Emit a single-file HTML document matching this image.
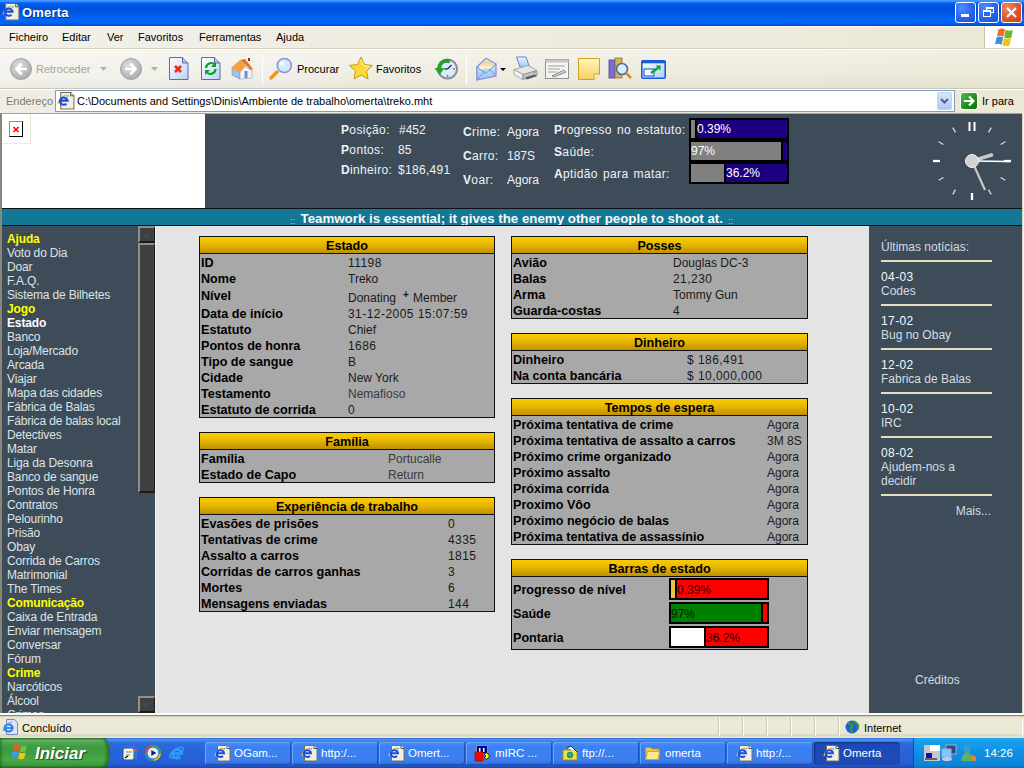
<!DOCTYPE html>
<html><head><meta charset="utf-8">
<style>
*{margin:0;padding:0;box-sizing:border-box}
html,body{width:1024px;height:768px;overflow:hidden;background:#ece9d8;font-family:"Liberation Sans",sans-serif;font-size:11px;position:relative}
.a{position:absolute}
.t{position:absolute;white-space:nowrap;line-height:14px}
svg{position:absolute;overflow:visible}
#title{left:0;top:0;width:1024px;height:26px;background:linear-gradient(#4898ff 0px,#3a8cff 1.5px,#0a6cf8 2.5px,#005ae8 4px,#0052de 8px,#0054e0 12px,#0062f2 17px,#0068fa 20px,#0062f4 23px,#0058e8 24.5px,#003cc0 26px)}
#menu{left:0;top:26px;width:1024px;height:23px;border-top:1px solid #fffbf0;background:linear-gradient(90deg,#f1f0ea 0%,#eeecdf 50%,#ebe8d6 100%);border-bottom:1px solid #d8d2bd}
#tool{left:0;top:49px;width:1024px;height:40px;background:linear-gradient(rgba(255,255,255,0.35),rgba(255,255,255,0) 70%,rgba(0,0,0,0.03)),linear-gradient(90deg,#f3f2ed 0%,#eeecdf 50%,#ebe8d6 100%);border-top:1px solid #fff;border-bottom:1px solid #cbc7b8}
#addr{left:0;top:89px;width:1024px;height:24px;background:linear-gradient(90deg,#efede4 0%,#ebe8d6 100%);border-top:1px solid #fff}
#page{left:0;top:113px;width:1024px;height:600px;background:#3e4c59;border-left:2px solid #8a877a;border-top:1px solid #a8a49a}
#logo{left:2px;top:114px;width:203px;height:94px;background:#fff}
#banner{left:2px;top:208px;width:1020px;height:18px;background:#127896;border-top:1px solid #111;border-bottom:1px solid #111}
#side{left:2px;top:226px;width:136px;height:487px;background:#3e4c59}
#content{left:155px;top:226px;width:714px;height:487px;background:#e4e4e4;border-left:1px solid #f4f4f4}
#news{left:869px;top:226px;width:153px;height:487px;background:#3e4c59}
#status{left:0;top:713px;width:1024px;height:25px;background:linear-gradient(#fffff8 0px,#fffff8 2px,#8a8678 2px,#8a8678 3px,#c8c4b0 3px,#e6e2d0 4px,#ece9d8 6px,#ebe8d6 20px,#d8d4c0 23px,#ece6cc 24px)}
#task{left:0;top:738px;width:1024px;height:30px;background:linear-gradient(#2a62d6 0px,#4892f0 1.5px,#3f84ea 3px,#2d6ade 5px,#2862d8 15px,#2560d6 24px,#2258cf 27px,#1a48b0 30px)}
.menu{top:30px;font-size:11px;color:#000}
.tb{font-size:11px;color:#000;top:62px}
</style></head><body>
<!-- ===== TITLE BAR ===== -->
<div id="title" class="a"></div>
<svg style="left:2px;top:3px" width="18" height="18" viewBox="0 0 17 17"><path d="M3.5 0.5h9.5l3 3v12.5H3.5z" fill="#f2efe2" stroke="#7a6e58"/><path d="M13 0.5v3h3" fill="#fff" stroke="#5a5040"/><path d="M1 11c1-4 4-7 8-8" stroke="#f0b050" stroke-width="1.3" fill="none"/><path d="M3 8.2h7a3.6 3.4 0 1 0-1 2.8" fill="none" stroke="#1a50d8" stroke-width="2"/><path d="M9.5 4.5l1.5-1.5" stroke="#30c0f0" stroke-width="1.2"/></svg>
<div class="t" style="left:22px;top:6px;font-size:13px;font-weight:bold;color:#fff;text-shadow:1px 1px 0 #0a2a80;letter-spacing:0.2px">Omerta</div>
<!-- window buttons -->
<div class="a" style="left:955px;top:2px;width:21px;height:21px;border:1px solid #fff;border-radius:3px;background:radial-gradient(circle at 30% 25%,#4f8cff 0%,#2a66f2 50%,#1a4fe0 100%)"></div>
<div class="a" style="left:961px;top:14px;width:8px;height:3px;background:#fff"></div>
<div class="a" style="left:978px;top:2px;width:21px;height:21px;border:1px solid #fff;border-radius:3px;background:radial-gradient(circle at 30% 25%,#4f8cff 0%,#2a66f2 50%,#1a4fe0 100%)"></div>
<div class="a" style="left:986px;top:7px;width:8px;height:6px;border:1px solid #fff;border-top-width:2px"></div>
<div class="a" style="left:983px;top:10px;width:8px;height:7px;border:1px solid #fff;border-top-width:2px;background:#2a66f2"></div>
<div class="a" style="left:1001px;top:2px;width:21px;height:21px;border:1px solid #fff;border-radius:3px;background:radial-gradient(circle at 30% 25%,#f08a68 0%,#e2582e 50%,#c93d14 100%)"></div>
<svg style="left:1001px;top:2px" width="21" height="21"><path d="M6 6l9 9M15 6l-9 9" stroke="#fff" stroke-width="2"/></svg>

<!-- ===== MENU BAR ===== -->
<div id="menu" class="a"></div>
<div class="t menu" style="left:9px">Ficheiro</div>
<div class="t menu" style="left:62px">Editar</div>
<div class="t menu" style="left:107px">Ver</div>
<div class="t menu" style="left:138px">Favoritos</div>
<div class="t menu" style="left:199px">Ferramentas</div>
<div class="t menu" style="left:276px">Ajuda</div>
<div class="a" style="left:984px;top:26px;width:1px;height:22px;background:#c8c4b0"></div>
<div class="a" style="left:985px;top:26px;width:39px;height:22px;background:#fff"></div>
<svg style="left:995px;top:28px" width="20" height="18" viewBox="0 0 20 18">
 <path d="M3.5 1.2c2.2-1 4.5-0.8 6.6 0.3l-1.6 7.2c-2.1-1.1-4.4-1.3-6.6-0.3z" fill="#f46a26"/>
 <path d="M10.8 1.8c2.3 1.2 4.7 1.3 7.2 0.3l-1.7 7.4c-2.4 1-4.8 0.9-7.1-0.3z" fill="#6ab82e"/>
 <path d="M1.6 9.2c2.2-1 4.5-0.8 6.6 0.3l-1.6 7.2c-2.1-1.1-4.4-1.3-6.6-0.3z" fill="#3c8ee0"/>
 <path d="M9 9.8c2.3 1.2 4.7 1.3 7.2 0.3l-1.7 7.4c-2.4 1-4.8 0.9-7.1-0.3z" fill="#f4c21c"/>
</svg>

<!-- ===== TOOLBAR ===== -->
<div id="tool" class="a"></div>
<!-- back -->
<div class="a" style="left:10px;top:58px;width:22px;height:22px;border-radius:50%;background:radial-gradient(circle at 40% 35%,#e0e0e0,#b8b8b8 60%,#9c9c9c);border:1px solid #a0a0a0"></div>
<svg style="left:10px;top:58px" width="22" height="22"><path d="M16 11H7M11 6.5L6.5 11l4.5 4.5" stroke="#fff" stroke-width="2.6" fill="none" stroke-linecap="round" stroke-linejoin="round"/></svg>
<div class="t tb" style="left:36px;color:#a8a596">Retroceder</div>
<svg style="left:100px;top:67px" width="7" height="4"><path d="M0 0h7L3.5 4z" fill="#b4b1a4"/></svg>
<!-- forward -->
<div class="a" style="left:120px;top:58px;width:22px;height:22px;border-radius:50%;background:radial-gradient(circle at 40% 35%,#e0e0e0,#b8b8b8 60%,#9c9c9c);border:1px solid #a0a0a0"></div>
<svg style="left:120px;top:58px" width="22" height="22"><path d="M6 11h9M11 6.5l4.5 4.5L11 15.5" stroke="#fff" stroke-width="2.6" fill="none" stroke-linecap="round" stroke-linejoin="round"/></svg>
<svg style="left:151px;top:67px" width="7" height="4"><path d="M0 0h7L3.5 4z" fill="#b4b1a4"/></svg>
<!-- stop -->
<svg style="left:169px;top:57px" width="20" height="23" viewBox="0 0 20 23">
 <defs><linearGradient id="doc" x1="0" y1="0" x2="1" y2="1"><stop offset="0" stop-color="#fff"/><stop offset="1" stop-color="#b8d4f4"/></linearGradient></defs>
 <path d="M0.5 0.5h13l5.5 5.5v16.5H0.5z" fill="url(#doc)" stroke="#5a6ea8"/>
 <path d="M13.5 0.5v5.5h5.5" fill="#a8c4ec" stroke="#5a6ea8"/>
 <path d="M6 9l6 6M12 9l-6 6" stroke="#f02a10" stroke-width="2.6"/>
</svg>
<!-- refresh -->
<svg style="left:201px;top:57px" width="20" height="23" viewBox="0 0 20 23">
 <path d="M0.5 0.5h13l5.5 5.5v16.5H0.5z" fill="url(#doc)" stroke="#5a6ea8"/>
 <path d="M13.5 0.5v5.5h5.5" fill="#a8c4ec" stroke="#5a6ea8"/>
 <path d="M5 11a5 5 0 0 1 8.5-3.5M14.5 12a5 5 0 0 1-8.5 3.5" stroke="#12a020" stroke-width="2.2" fill="none"/>
 <path d="M15 5v5h-5z" fill="#12a020"/><path d="M4 18v-5h5z" fill="#12a020"/>
</svg>
<!-- home -->
<svg style="left:230px;top:57px" width="24" height="23" viewBox="0 0 24 23">
 <path d="M2 11l8 4v7l-8-4z" fill="#9cc4ec" stroke="#6c8cb8" stroke-width="0.6"/>
 <path d="M10 15l5-6 7 5v7l-12 1z" fill="#eef4fc" stroke="#8aa0c8" stroke-width="0.6"/>
 <path d="M1 11l9-8 6 6-6 6z" fill="#f2a040"/>
 <path d="M10 3l5-1 8 10-2 1z" fill="#d87a2a"/>
 <rect x="14.5" y="14" width="3" height="7" fill="#7c88c0"/>
 <rect x="18" y="1" width="2" height="3" fill="#b02020"/>
</svg>
<div class="a" style="left:262px;top:53px;width:1px;height:32px;background:#d0cdbf;border-right:1px solid #fff"></div>
<!-- search -->
<svg style="left:268px;top:57px" width="25" height="24" viewBox="0 0 25 24">
 <path d="M3 21l6-6" stroke="#e8982a" stroke-width="3.5" stroke-linecap="round"/>
 <circle cx="16.3" cy="8.5" r="7" fill="#cdebfc" stroke="#8e90d8" stroke-width="1.6"/>
 <circle cx="14" cy="6.5" r="2.5" fill="#fff" opacity="0.7"/>
</svg>
<div class="t tb" style="left:297px">Procurar</div>
<!-- favorites -->
<svg style="left:348px;top:56px" width="26" height="25" viewBox="0 0 26 25">
 <path d="M13 1l3.5 7.5 8 1-6 5.5 1.6 8L13 19l-7.1 4 1.6-8-6-5.5 8-1z" fill="#fcd838" stroke="#c89818" stroke-width="1"/>
 <path d="M13 4l2.5 5.5 5.5 0.8-4 3.5" fill="none" stroke="#fff6b0" stroke-width="1"/>
</svg>
<div class="t tb" style="left:376px">Favoritos</div>
<!-- history -->
<svg style="left:433px;top:57px" width="26" height="24" viewBox="0 0 26 24">
 <circle cx="14.5" cy="12" r="9.5" fill="#d4ecfc" stroke="#8c8c98" stroke-width="2"/>
 <path d="M14.5 12l4-4M14.5 12h-3" stroke="#303840" stroke-width="1.4"/>
 <circle cx="21" cy="12" r="0.9" fill="#f04020"/><circle cx="14.5" cy="19" r="0.9" fill="#f04020"/>
 <path d="M17 4.5C11 2.5 6 6 6.5 12" stroke="#28a028" stroke-width="3.6" fill="none"/>
 <path d="M1.5 11h10l-5 7z" fill="#28a028"/>
</svg>
<div class="a" style="left:466px;top:53px;width:1px;height:32px;background:#d0cdbf;border-right:1px solid #fff"></div>
<!-- mail -->
<svg style="left:476px;top:57px" width="22" height="24" viewBox="0 0 22 24">
 <defs><linearGradient id="env" x1="0" y1="0" x2="0" y2="1"><stop offset="0" stop-color="#d8f0fc"/><stop offset="1" stop-color="#8ccaf4"/></linearGradient>
 <linearGradient id="let" x1="0" y1="0" x2="0" y2="1"><stop offset="0" stop-color="#f8c870"/><stop offset="1" stop-color="#fff"/></linearGradient></defs>
 <path d="M0.8 10L10 1.2l10 5.6V19L0.8 23z" fill="url(#env)" stroke="#8c88d8" stroke-width="1.2"/>
 <path d="M3.5 9C7 3.5 13 3.5 17 6.5l-0.8 5.5C12 10.5 7 11 3.5 13z" fill="url(#let)"/>
 <path d="M0.8 23l8-9M20 19l-6.5-7M0.8 10l9 6.5L20 7" fill="none" stroke="#8c88d8" stroke-width="1"/>
</svg>
<svg style="left:500px;top:68px" width="6" height="3"><path d="M0 0h6L3 3z" fill="#000"/></svg>
<!-- printer -->
<svg style="left:513px;top:56px" width="25" height="25" viewBox="0 0 25 25">
 <defs><linearGradient id="pap" x1="0" y1="0" x2="0" y2="1"><stop offset="0" stop-color="#f0f8ff"/><stop offset="1" stop-color="#98c8f4"/></linearGradient></defs>
 <path d="M3.5 1h9.5l3.5 10h-9.5z" fill="url(#pap)" stroke="#7c7cd0" stroke-width="1"/>
 <path d="M1 13.5L15 9.5l9 5L10 18.5z" fill="#e6e6e6" stroke="#9c9c9c" stroke-width="0.8"/>
 <path d="M1 13.5l9 5v5l-9-5z" fill="#f2f2f2" stroke="#9c9c9c" stroke-width="0.8"/>
 <path d="M10 18.5l14-4v5l-14 4z" fill="#c4c4c4" stroke="#8c8c8c" stroke-width="0.8"/>
 <path d="M12 21.5l10-3 2 1.5-10 3.5z" fill="#585868"/>
 <rect x="20.5" y="15.5" width="2" height="1.3" fill="#40c040"/>
</svg>
<!-- edit -->
<svg style="left:545px;top:59px" width="24" height="20" viewBox="0 0 24 20">
 <rect x="0.5" y="0.5" width="23" height="19" fill="#f4f4f0" stroke="#909090"/>
 <rect x="0.5" y="0.5" width="23" height="3" fill="#c8c8c8"/>
 <path d="M3 7h17M3 10h12M3 13h9" stroke="#a0a0a0"/>
 <path d="M7 17l12-6 2 2-12 5z" fill="#d8d8d8" stroke="#707070" stroke-width="0.8"/>
</svg>
<!-- discuss note -->
<svg style="left:578px;top:58px" width="23" height="22" viewBox="0 0 23 22">
 <defs><linearGradient id="note" x1="0" y1="0" x2="0" y2="1"><stop offset="0" stop-color="#fff6c0"/><stop offset="1" stop-color="#f8d060"/></linearGradient></defs>
 <path d="M0.5 0.5h21v15.5l-5.5 5.5H0.5z" fill="url(#note)" stroke="#d4a020"/>
 <path d="M16 21.5v-5.5h5.5" fill="#fff8d0" stroke="#d4a020"/>
</svg>
<!-- research -->
<svg style="left:608px;top:57px" width="24" height="24" viewBox="0 0 24 24">
 <rect x="1" y="3" width="6" height="18" fill="#7a70c8" stroke="#4a40a0" stroke-width="0.8"/>
 <rect x="7" y="1" width="7" height="20" fill="#d8b060" stroke="#907030" stroke-width="0.8"/>
 <circle cx="14" cy="12" r="5.5" fill="#d8ecfc" stroke="#506c90" stroke-width="1.6"/>
 <path d="M18 16l5 5" stroke="#d09020" stroke-width="2.5"/>
</svg>
<!-- messenger -->
<svg style="left:641px;top:60px" width="25" height="19" viewBox="0 0 25 19">
 <defs><linearGradient id="msg" x1="0" y1="0" x2="1" y2="1"><stop offset="0" stop-color="#ffffff"/><stop offset="1" stop-color="#a8d0f8"/></linearGradient></defs>
 <rect x="0.8" y="0.8" width="23.4" height="17.4" rx="1" fill="url(#msg)" stroke="#1a5ad8" stroke-width="1.6"/>
 <rect x="0.8" y="0.8" width="23.4" height="2.5" fill="#1a5ad8"/>
 <rect x="3" y="9" width="10" height="7" fill="#f4f8ff" stroke="#2a6ad8" stroke-width="1.2"/>
 <path d="M10 13l7-5" stroke="#10a020" stroke-width="2.2"/><path d="M14.5 5.5h5v5z" fill="#10a020"/>
</svg>

<!-- ===== ADDRESS BAR ===== -->
<div id="addr" class="a"></div>
<div class="t" style="left:6px;top:94px;font-size:11px;color:#7c7a70">Endereço</div>
<div class="a" style="left:55px;top:90px;width:900px;height:22px;background:#fff;border:1px solid #7f9db9"></div>
<svg style="left:57px;top:92px" width="18" height="18" viewBox="0 0 17 17"><path d="M3.5 0.5h9.5l3 3v12.5H3.5z" fill="#f2efe2" stroke="#7a6e58"/><path d="M13 0.5v3h3" fill="#fff" stroke="#5a5040"/><path d="M1 11c1-4 4-7 8-8" stroke="#f0b050" stroke-width="1.3" fill="none"/><path d="M3 8.2h7a3.6 3.4 0 1 0-1 2.8" fill="none" stroke="#1a50d8" stroke-width="2"/><path d="M9.5 4.5l1.5-1.5" stroke="#30c0f0" stroke-width="1.2"/></svg>
<div class="t" style="left:77px;top:94px;font-size:11px;color:#000">C:\Documents and Settings\Dinis\Ambiente de trabalho\omerta\treko.mht</div>
<div class="a" style="left:937px;top:92px;width:15px;height:18px;border-radius:2px;background:linear-gradient(#d8e4fc,#b4c8f4);border:1px solid #c0d0f0"></div>
<svg style="left:940px;top:98px" width="9" height="6"><path d="M1 1l3.5 3.5L8 1" stroke="#4d6185" stroke-width="2" fill="none"/></svg>
<div class="a" style="left:960px;top:92px;width:18px;height:18px;border-radius:3px;background:linear-gradient(135deg,#4cc24c,#1a8c1a 60%,#0a700a);border:1px solid #fff"></div>
<svg style="left:960px;top:92px" width="18" height="18"><path d="M4 9h9M9 4.5L13.5 9 9 13.5" stroke="#fff" stroke-width="2.2" fill="none"/></svg>
<div class="t" style="left:982px;top:94px;font-size:11px;color:#000">Ir para</div>

<!-- ===== PAGE ===== -->
<div id="page" class="a"></div>
<div id="logo" class="a"></div>
<div id="banner" class="a"></div>
<div id="side" class="a"></div>
<div id="content" class="a"></div>
<div id="news" class="a"></div>

<div class="a" style="left:2px;top:114px;width:29px;height:30px;border-right:1px solid #ece8d8;border-bottom:1px solid #ece8d8"></div>
<div class="a" style="left:9px;top:121px;width:14px;height:16px;background:#fff;border-left:1px solid #8e8e8e;border-top:1px solid #8e8e8e;border-right:1px solid #000;border-bottom:1px solid #000"></div>
<svg style="left:9px;top:121px" width="14" height="16"><path d="M4.5 6l5 5M9.5 6l-5 5" stroke="#f00" stroke-width="1.6"/></svg>
<div class="t" style="left:341px;top:123.84px;font-size:12px;line-height:12px;color:#eef2f4;font-weight:normal;letter-spacing:0.35px;word-spacing:1.5px"><b>P</b>osição:</div>
<div class="t" style="left:399px;top:123.84px;font-size:12px;line-height:12px;color:#eef2f4;font-weight:normal;">#452</div>
<div class="t" style="left:341px;top:143.84px;font-size:12px;line-height:12px;color:#eef2f4;font-weight:normal;letter-spacing:0.35px;word-spacing:1.5px"><b>P</b>ontos:</div>
<div class="t" style="left:398px;top:143.84px;font-size:12px;line-height:12px;color:#eef2f4;font-weight:normal;">85</div>
<div class="t" style="left:341px;top:163.84px;font-size:12px;line-height:12px;color:#eef2f4;font-weight:normal;letter-spacing:0.35px;word-spacing:1.5px"><b>D</b>inheiro:</div>
<div class="t" style="left:398px;top:163.84px;font-size:12px;line-height:12px;color:#eef2f4;font-weight:normal;letter-spacing:0.3px">$186,491</div>
<div class="t" style="left:463px;top:125.84px;font-size:12px;line-height:12px;color:#eef2f4;font-weight:normal;letter-spacing:0.35px;word-spacing:1.5px"><b>C</b>rime:</div>
<div class="t" style="left:507px;top:125.84px;font-size:12px;line-height:12px;color:#eef2f4;font-weight:normal;">Agora</div>
<div class="t" style="left:463px;top:149.84px;font-size:12px;line-height:12px;color:#eef2f4;font-weight:normal;letter-spacing:0.35px;word-spacing:1.5px"><b>C</b>arro:</div>
<div class="t" style="left:507px;top:149.84px;font-size:12px;line-height:12px;color:#eef2f4;font-weight:normal;">187S</div>
<div class="t" style="left:463px;top:173.84px;font-size:12px;line-height:12px;color:#eef2f4;font-weight:normal;letter-spacing:0.35px;word-spacing:1.5px"><b>V</b>oar:</div>
<div class="t" style="left:507px;top:173.84px;font-size:12px;line-height:12px;color:#eef2f4;font-weight:normal;">Agora</div>
<div class="t" style="left:554px;top:123.84px;font-size:12px;line-height:12px;color:#eef2f4;font-weight:normal;letter-spacing:0.35px;word-spacing:1.5px"><b>P</b>rogresso no estatuto:</div>
<div class="t" style="left:554px;top:145.84px;font-size:12px;line-height:12px;color:#eef2f4;font-weight:normal;letter-spacing:0.35px;word-spacing:1.5px"><b>S</b>aúde:</div>
<div class="t" style="left:554px;top:167.84px;font-size:12px;line-height:12px;color:#eef2f4;font-weight:normal;letter-spacing:0.35px;word-spacing:1.5px"><b>A</b>ptidão para matar:</div>
<div class="a" style="left:689px;top:118px;width:100px;height:66px;background:#000"></div>
<div class="a" style="left:691px;top:120px;width:4px;height:18px;background:#808080"></div>
<div class="a" style="left:697px;top:120px;width:90px;height:18px;background:#1c0080"></div>
<div class="a" style="left:691px;top:142px;width:90px;height:18px;background:#808080"></div>
<div class="a" style="left:783px;top:142px;width:4px;height:18px;background:#1c0080"></div>
<div class="a" style="left:691px;top:164px;width:33px;height:18px;background:#808080"></div>
<div class="a" style="left:726px;top:164px;width:61px;height:18px;background:#1c0080"></div>
<div class="t" style="left:697px;top:122.84px;font-size:12px;line-height:12px;color:#fff;font-weight:normal;">0.39%</div>
<div class="t" style="left:691px;top:144.84px;font-size:12px;line-height:12px;color:#fff;font-weight:normal;">97%</div>
<div class="t" style="left:726px;top:166.84px;font-size:12px;line-height:12px;color:#fff;font-weight:normal;">36.2%</div>
<svg style="left:927px;top:116px" width="90" height="90" viewBox="-45 -45 90 90"><rect x="-3.5" y="-39" width="2" height="9" fill="#fff"/><rect x="1.5" y="-39" width="2" height="9" fill="#fff"/><line x1="16.50" y1="-28.58" x2="19.25" y2="-33.34" stroke="#d8d8d8" stroke-width="1.3"/><line x1="28.58" y1="-16.50" x2="33.34" y2="-19.25" stroke="#d8d8d8" stroke-width="1.3"/><line x1="32.00" y1="-0.00" x2="39.00" y2="-0.00" stroke="#fff" stroke-width="2.3"/><line x1="28.58" y1="16.50" x2="33.34" y2="19.25" stroke="#d8d8d8" stroke-width="1.3"/><line x1="16.50" y1="28.58" x2="19.25" y2="33.34" stroke="#d8d8d8" stroke-width="1.3"/><line x1="0.00" y1="32.00" x2="0.00" y2="39.00" stroke="#fff" stroke-width="2.3"/><line x1="-16.50" y1="28.58" x2="-19.25" y2="33.34" stroke="#d8d8d8" stroke-width="1.3"/><line x1="-28.58" y1="16.50" x2="-33.34" y2="19.25" stroke="#d8d8d8" stroke-width="1.3"/><line x1="-32.00" y1="0.00" x2="-39.00" y2="0.00" stroke="#fff" stroke-width="2.3"/><line x1="-28.58" y1="-16.50" x2="-33.34" y2="-19.25" stroke="#d8d8d8" stroke-width="1.3"/><line x1="-16.50" y1="-28.58" x2="-19.25" y2="-33.34" stroke="#d8d8d8" stroke-width="1.3"/><line x1="0" y1="0" x2="19.5" y2="-6" stroke="#c8c8c8" stroke-width="3.5" stroke-linecap="round"/><line x1="0" y1="0" x2="13" y2="29" stroke="#c8c8c8" stroke-width="2.2"/><line x1="0" y1="0" x2="38" y2="0.5" stroke="#fff" stroke-width="1.5"/><circle cx="0" cy="0" r="6.5" fill="#d2d2d2" stroke="#f4f4ff" stroke-width="1"/></svg>
<div class="t" style="left:290px;top:216.83px;font-size:9px;line-height:9px;color:#b8d8e0;font-weight:normal;">::</div>
<div class="t" style="left:300.5px;top:211.74px;font-size:13.3px;line-height:13.3px;color:#f8f8f8;font-weight:bold;">Teamwork is essential; it gives the enemy other people to shoot at.</div>
<div class="t" style="left:728px;top:216.83px;font-size:9px;line-height:9px;color:#b8d8e0;font-weight:normal;">::</div>
<div class="a" style="left:2px;top:225px;width:1020px;height:1px;background:#111"></div>
<div class="a" style="left:2px;top:226px;width:136px;height:487px;overflow:hidden"><div class="t" style="left:5px;top:6.84px;font-size:12px;line-height:12px;color:#ffff00;font-weight:bold;letter-spacing:-0.15px">Ajuda</div>
<div class="t" style="left:5px;top:20.84px;font-size:12px;line-height:12px;color:#dce4e8;font-weight:normal;letter-spacing:-0.15px">Voto do Dia</div>
<div class="t" style="left:5px;top:34.84px;font-size:12px;line-height:12px;color:#dce4e8;font-weight:normal;letter-spacing:-0.15px">Doar</div>
<div class="t" style="left:5px;top:48.84px;font-size:12px;line-height:12px;color:#dce4e8;font-weight:normal;letter-spacing:-0.15px">F.A.Q.</div>
<div class="t" style="left:5px;top:62.84px;font-size:12px;line-height:12px;color:#dce4e8;font-weight:normal;letter-spacing:-0.15px">Sistema de Bilhetes</div>
<div class="t" style="left:5px;top:76.84px;font-size:12px;line-height:12px;color:#ffff00;font-weight:bold;letter-spacing:-0.15px">Jogo</div>
<div class="t" style="left:5px;top:90.84px;font-size:12px;line-height:12px;color:#ffffff;font-weight:bold;letter-spacing:-0.15px">Estado</div>
<div class="t" style="left:5px;top:104.84px;font-size:12px;line-height:12px;color:#dce4e8;font-weight:normal;letter-spacing:-0.15px">Banco</div>
<div class="t" style="left:5px;top:118.84px;font-size:12px;line-height:12px;color:#dce4e8;font-weight:normal;letter-spacing:-0.15px">Loja/Mercado</div>
<div class="t" style="left:5px;top:132.84px;font-size:12px;line-height:12px;color:#dce4e8;font-weight:normal;letter-spacing:-0.15px">Arcada</div>
<div class="t" style="left:5px;top:146.84px;font-size:12px;line-height:12px;color:#dce4e8;font-weight:normal;letter-spacing:-0.15px">Viajar</div>
<div class="t" style="left:5px;top:160.84px;font-size:12px;line-height:12px;color:#dce4e8;font-weight:normal;letter-spacing:-0.15px">Mapa das cidades</div>
<div class="t" style="left:5px;top:174.84px;font-size:12px;line-height:12px;color:#dce4e8;font-weight:normal;letter-spacing:-0.15px">Fábrica de Balas</div>
<div class="t" style="left:5px;top:188.84px;font-size:12px;line-height:12px;color:#dce4e8;font-weight:normal;letter-spacing:-0.15px">Fábrica de balas local</div>
<div class="t" style="left:5px;top:202.84px;font-size:12px;line-height:12px;color:#dce4e8;font-weight:normal;letter-spacing:-0.15px">Detectives</div>
<div class="t" style="left:5px;top:216.84px;font-size:12px;line-height:12px;color:#dce4e8;font-weight:normal;letter-spacing:-0.15px">Matar</div>
<div class="t" style="left:5px;top:230.84px;font-size:12px;line-height:12px;color:#dce4e8;font-weight:normal;letter-spacing:-0.15px">Liga da Desonra</div>
<div class="t" style="left:5px;top:244.84px;font-size:12px;line-height:12px;color:#dce4e8;font-weight:normal;letter-spacing:-0.15px">Banco de sangue</div>
<div class="t" style="left:5px;top:258.84px;font-size:12px;line-height:12px;color:#dce4e8;font-weight:normal;letter-spacing:-0.15px">Pontos de Honra</div>
<div class="t" style="left:5px;top:272.84px;font-size:12px;line-height:12px;color:#dce4e8;font-weight:normal;letter-spacing:-0.15px">Contratos</div>
<div class="t" style="left:5px;top:286.84px;font-size:12px;line-height:12px;color:#dce4e8;font-weight:normal;letter-spacing:-0.15px">Pelourinho</div>
<div class="t" style="left:5px;top:300.84px;font-size:12px;line-height:12px;color:#dce4e8;font-weight:normal;letter-spacing:-0.15px">Prisão</div>
<div class="t" style="left:5px;top:314.84px;font-size:12px;line-height:12px;color:#dce4e8;font-weight:normal;letter-spacing:-0.15px">Obay</div>
<div class="t" style="left:5px;top:328.84px;font-size:12px;line-height:12px;color:#dce4e8;font-weight:normal;letter-spacing:-0.15px">Corrida de Carros</div>
<div class="t" style="left:5px;top:342.84px;font-size:12px;line-height:12px;color:#dce4e8;font-weight:normal;letter-spacing:-0.15px">Matrimonial</div>
<div class="t" style="left:5px;top:356.84px;font-size:12px;line-height:12px;color:#dce4e8;font-weight:normal;letter-spacing:-0.15px">The Times</div>
<div class="t" style="left:5px;top:370.84px;font-size:12px;line-height:12px;color:#ffff00;font-weight:bold;letter-spacing:-0.15px">Comunicação</div>
<div class="t" style="left:5px;top:384.84px;font-size:12px;line-height:12px;color:#dce4e8;font-weight:normal;letter-spacing:-0.15px">Caixa de Entrada</div>
<div class="t" style="left:5px;top:398.84px;font-size:12px;line-height:12px;color:#dce4e8;font-weight:normal;letter-spacing:-0.15px">Enviar mensagem</div>
<div class="t" style="left:5px;top:412.84px;font-size:12px;line-height:12px;color:#dce4e8;font-weight:normal;letter-spacing:-0.15px">Conversar</div>
<div class="t" style="left:5px;top:426.84px;font-size:12px;line-height:12px;color:#dce4e8;font-weight:normal;letter-spacing:-0.15px">Fórum</div>
<div class="t" style="left:5px;top:440.84px;font-size:12px;line-height:12px;color:#ffff00;font-weight:bold;letter-spacing:-0.15px">Crime</div>
<div class="t" style="left:5px;top:454.84px;font-size:12px;line-height:12px;color:#dce4e8;font-weight:normal;letter-spacing:-0.15px">Narcóticos</div>
<div class="t" style="left:5px;top:468.84px;font-size:12px;line-height:12px;color:#dce4e8;font-weight:normal;letter-spacing:-0.15px">Álcool</div>
<div class="t" style="left:5px;top:482.84px;font-size:12px;line-height:12px;color:#dce4e8;font-weight:normal;letter-spacing:-0.15px">Crimes</div>
</div>
<div class="a" style="left:138px;top:226px;width:17px;height:17px;background:#404040;border-top:2px solid #8e8e8e;border-left:2px solid #8e8e8e;border-right:1px solid #1a1a1a;border-bottom:2px solid #1a1a1a"></div>
<svg style="left:138px;top:226px" width="17" height="17"><path d="M5 11h7L8.5 6.5z" fill="#3e4c59"/></svg>
<div class="a" style="left:138px;top:243px;width:17px;height:250px;background:#404040;border-top:2px solid #8e8e8e;border-left:2px solid #8e8e8e;border-right:1px solid #1a1a1a;border-bottom:2px solid #1a1a1a"></div>
<div class="a" style="left:138px;top:696px;width:17px;height:17px;background:#404040;border-top:2px solid #8e8e8e;border-left:2px solid #8e8e8e;border-right:1px solid #1a1a1a;border-bottom:2px solid #1a1a1a"></div>
<svg style="left:138px;top:696px" width="17" height="17"><path d="M5 7h7L8.5 11.5z" fill="#3e4c59"/></svg>
<div class="a" style="left:199px;top:236px;width:296px;height:182px;background:#a8a8a8;border:1px solid #111"></div>
<div class="a" style="left:200px;top:237px;width:294px;height:16px;background:linear-gradient(#fbcc00,#e8b800 45%,#c09000)"></div>
<div class="a" style="left:200px;top:253px;width:294px;height:1px;background:#111"></div>
<div class="t" style="left:199px;top:238px;width:296px;text-align:center;font-size:12.6px;line-height:17px;font-weight:bold;color:#000">Estado</div>
<div class="t" style="left:201px;top:257.33px;font-size:12.6px;line-height:12.6px;color:#000;font-weight:bold;">ID</div>
<div class="t" style="left:348px;top:256.84px;font-size:12px;line-height:12px;color:#1a1a1a;font-weight:normal;letter-spacing:0.45px">11198</div>
<div class="t" style="left:201px;top:273.33px;font-size:12.6px;line-height:12.6px;color:#000;font-weight:bold;">Nome</div>
<div class="t" style="left:348px;top:272.84px;font-size:12px;line-height:12px;color:#1a1a1a;font-weight:normal;">Treko</div>
<div class="t" style="left:201px;top:290.33px;font-size:12.6px;line-height:12.6px;color:#000;font-weight:bold;">Nível</div>
<div class="t" style="left:348px;top:291.84px;font-size:12px;line-height:12px;color:#1a1a1a;font-weight:normal;">Donating</div>
<div class="t" style="left:403px;top:289.54px;font-size:10px;line-height:10px;color:#1a1a1a;font-weight:bold;">+</div>
<div class="t" style="left:413px;top:291.84px;font-size:12px;line-height:12px;color:#1a1a1a;font-weight:normal;">Member</div>
<div class="t" style="left:201px;top:308.33px;font-size:12.6px;line-height:12.6px;color:#000;font-weight:bold;">Data de início</div>
<div class="t" style="left:348px;top:307.84px;font-size:12px;line-height:12px;color:#1a1a1a;font-weight:normal;letter-spacing:0.45px">31-12-2005 15:07:59</div>
<div class="t" style="left:201px;top:324.33px;font-size:12.6px;line-height:12.6px;color:#000;font-weight:bold;">Estatuto</div>
<div class="t" style="left:348px;top:323.84px;font-size:12px;line-height:12px;color:#1a1a1a;font-weight:normal;">Chief</div>
<div class="t" style="left:201px;top:340.33px;font-size:12.6px;line-height:12.6px;color:#000;font-weight:bold;">Pontos de honra</div>
<div class="t" style="left:348px;top:339.84px;font-size:12px;line-height:12px;color:#1a1a1a;font-weight:normal;letter-spacing:0.45px">1686</div>
<div class="t" style="left:201px;top:356.33px;font-size:12.6px;line-height:12.6px;color:#000;font-weight:bold;">Tipo de sangue</div>
<div class="t" style="left:348px;top:355.84px;font-size:12px;line-height:12px;color:#1a1a1a;font-weight:normal;">B</div>
<div class="t" style="left:201px;top:372.33px;font-size:12.6px;line-height:12.6px;color:#000;font-weight:bold;">Cidade</div>
<div class="t" style="left:348px;top:371.84px;font-size:12px;line-height:12px;color:#1a1a1a;font-weight:normal;">New York</div>
<div class="t" style="left:201px;top:388.33px;font-size:12.6px;line-height:12.6px;color:#000;font-weight:bold;">Testamento</div>
<div class="t" style="left:348px;top:387.84px;font-size:12px;line-height:12px;color:#3a3a3a;font-weight:normal;">Nemafioso</div>
<div class="t" style="left:201px;top:404.33px;font-size:12.6px;line-height:12.6px;color:#000;font-weight:bold;">Estatuto de corrida</div>
<div class="t" style="left:348px;top:403.84px;font-size:12px;line-height:12px;color:#1a1a1a;font-weight:normal;letter-spacing:0.45px">0</div>
<div class="a" style="left:199px;top:432px;width:296px;height:51px;background:#a8a8a8;border:1px solid #111"></div>
<div class="a" style="left:200px;top:433px;width:294px;height:16px;background:linear-gradient(#fbcc00,#e8b800 45%,#c09000)"></div>
<div class="a" style="left:200px;top:449px;width:294px;height:1px;background:#111"></div>
<div class="t" style="left:199px;top:434px;width:296px;text-align:center;font-size:12.6px;line-height:17px;font-weight:bold;color:#000">Família</div>
<div class="t" style="left:201px;top:453.33px;font-size:12.6px;line-height:12.6px;color:#000;font-weight:bold;">Família</div>
<div class="t" style="left:388px;top:452.84px;font-size:12px;line-height:12px;color:#3a3a3a;font-weight:normal;">Portucalle</div>
<div class="t" style="left:201px;top:469.33px;font-size:12.6px;line-height:12.6px;color:#000;font-weight:bold;">Estado de Capo</div>
<div class="t" style="left:388px;top:468.84px;font-size:12px;line-height:12px;color:#3a3a3a;font-weight:normal;">Return</div>
<div class="a" style="left:199px;top:497px;width:296px;height:115px;background:#a8a8a8;border:1px solid #111"></div>
<div class="a" style="left:200px;top:498px;width:294px;height:16px;background:linear-gradient(#fbcc00,#e8b800 45%,#c09000)"></div>
<div class="a" style="left:200px;top:514px;width:294px;height:1px;background:#111"></div>
<div class="t" style="left:199px;top:499px;width:296px;text-align:center;font-size:12.6px;line-height:17px;font-weight:bold;color:#000">Experiência de trabalho</div>
<div class="t" style="left:201px;top:518.33px;font-size:12.6px;line-height:12.6px;color:#000;font-weight:bold;">Evasões de prisões</div>
<div class="t" style="left:448px;top:517.84px;font-size:12px;line-height:12px;color:#1a1a1a;font-weight:normal;letter-spacing:0.45px">0</div>
<div class="t" style="left:201px;top:534.33px;font-size:12.6px;line-height:12.6px;color:#000;font-weight:bold;">Tentativas de crime</div>
<div class="t" style="left:448px;top:533.84px;font-size:12px;line-height:12px;color:#1a1a1a;font-weight:normal;letter-spacing:0.45px">4335</div>
<div class="t" style="left:201px;top:550.33px;font-size:12.6px;line-height:12.6px;color:#000;font-weight:bold;">Assalto a carros</div>
<div class="t" style="left:448px;top:549.84px;font-size:12px;line-height:12px;color:#1a1a1a;font-weight:normal;letter-spacing:0.45px">1815</div>
<div class="t" style="left:201px;top:566.33px;font-size:12.6px;line-height:12.6px;color:#000;font-weight:bold;">Corridas de carros ganhas</div>
<div class="t" style="left:448px;top:565.84px;font-size:12px;line-height:12px;color:#1a1a1a;font-weight:normal;letter-spacing:0.45px">3</div>
<div class="t" style="left:201px;top:582.33px;font-size:12.6px;line-height:12.6px;color:#000;font-weight:bold;">Mortes</div>
<div class="t" style="left:448px;top:581.84px;font-size:12px;line-height:12px;color:#1a1a1a;font-weight:normal;letter-spacing:0.45px">6</div>
<div class="t" style="left:201px;top:598.33px;font-size:12.6px;line-height:12.6px;color:#000;font-weight:bold;">Mensagens enviadas</div>
<div class="t" style="left:448px;top:597.84px;font-size:12px;line-height:12px;color:#1a1a1a;font-weight:normal;letter-spacing:0.45px">144</div>
<div class="a" style="left:511px;top:236px;width:297px;height:83px;background:#a8a8a8;border:1px solid #111"></div>
<div class="a" style="left:512px;top:237px;width:295px;height:16px;background:linear-gradient(#fbcc00,#e8b800 45%,#c09000)"></div>
<div class="a" style="left:512px;top:253px;width:295px;height:1px;background:#111"></div>
<div class="t" style="left:511px;top:238px;width:297px;text-align:center;font-size:12.6px;line-height:17px;font-weight:bold;color:#000">Posses</div>
<div class="t" style="left:513px;top:257.33px;font-size:12.6px;line-height:12.6px;color:#000;font-weight:bold;">Avião</div>
<div class="t" style="left:673px;top:256.84px;font-size:12px;line-height:12px;color:#1a1a1a;font-weight:normal;">Douglas DC-3</div>
<div class="t" style="left:513px;top:273.33px;font-size:12.6px;line-height:12.6px;color:#000;font-weight:bold;">Balas</div>
<div class="t" style="left:673px;top:272.84px;font-size:12px;line-height:12px;color:#1a1a1a;font-weight:normal;letter-spacing:0.45px">21,230</div>
<div class="t" style="left:513px;top:289.33px;font-size:12.6px;line-height:12.6px;color:#000;font-weight:bold;">Arma</div>
<div class="t" style="left:673px;top:288.84px;font-size:12px;line-height:12px;color:#1a1a1a;font-weight:normal;">Tommy Gun</div>
<div class="t" style="left:513px;top:305.33px;font-size:12.6px;line-height:12.6px;color:#000;font-weight:bold;">Guarda-costas</div>
<div class="t" style="left:673px;top:304.84px;font-size:12px;line-height:12px;color:#1a1a1a;font-weight:normal;letter-spacing:0.45px">4</div>
<div class="a" style="left:511px;top:333px;width:297px;height:51px;background:#a8a8a8;border:1px solid #111"></div>
<div class="a" style="left:512px;top:334px;width:295px;height:16px;background:linear-gradient(#fbcc00,#e8b800 45%,#c09000)"></div>
<div class="a" style="left:512px;top:350px;width:295px;height:1px;background:#111"></div>
<div class="t" style="left:511px;top:335px;width:297px;text-align:center;font-size:12.6px;line-height:17px;font-weight:bold;color:#000">Dinheiro</div>
<div class="t" style="left:513px;top:354.33px;font-size:12.6px;line-height:12.6px;color:#000;font-weight:bold;">Dinheiro</div>
<div class="t" style="left:687px;top:353.84px;font-size:12px;line-height:12px;color:#1a1a1a;font-weight:normal;letter-spacing:0.45px">$ 186,491</div>
<div class="t" style="left:513px;top:370.33px;font-size:12.6px;line-height:12.6px;color:#000;font-weight:bold;">Na conta bancária</div>
<div class="t" style="left:687px;top:369.84px;font-size:12px;line-height:12px;color:#1a1a1a;font-weight:normal;letter-spacing:0.45px">$ 10,000,000</div>
<div class="a" style="left:511px;top:398px;width:297px;height:147px;background:#a8a8a8;border:1px solid #111"></div>
<div class="a" style="left:512px;top:399px;width:295px;height:16px;background:linear-gradient(#fbcc00,#e8b800 45%,#c09000)"></div>
<div class="a" style="left:512px;top:415px;width:295px;height:1px;background:#111"></div>
<div class="t" style="left:511px;top:400px;width:297px;text-align:center;font-size:12.6px;line-height:17px;font-weight:bold;color:#000">Tempos de espera</div>
<div class="t" style="left:513px;top:419.33px;font-size:12.6px;line-height:12.6px;color:#000;font-weight:bold;">Próxima tentativa de crime</div>
<div class="t" style="left:767px;top:418.84px;font-size:12px;line-height:12px;color:#1a1a1a;font-weight:normal;">Agora</div>
<div class="t" style="left:513px;top:435.33px;font-size:12.6px;line-height:12.6px;color:#000;font-weight:bold;">Próxima tentativa de assalto a carros</div>
<div class="t" style="left:767px;top:434.84px;font-size:12px;line-height:12px;color:#1a1a1a;font-weight:normal;">3M 8S</div>
<div class="t" style="left:513px;top:451.33px;font-size:12.6px;line-height:12.6px;color:#000;font-weight:bold;">Próximo crime organizado</div>
<div class="t" style="left:767px;top:450.84px;font-size:12px;line-height:12px;color:#1a1a1a;font-weight:normal;">Agora</div>
<div class="t" style="left:513px;top:467.33px;font-size:12.6px;line-height:12.6px;color:#000;font-weight:bold;">Próximo assalto</div>
<div class="t" style="left:767px;top:466.84px;font-size:12px;line-height:12px;color:#1a1a1a;font-weight:normal;">Agora</div>
<div class="t" style="left:513px;top:483.33px;font-size:12.6px;line-height:12.6px;color:#000;font-weight:bold;">Próxima corrida</div>
<div class="t" style="left:767px;top:482.84px;font-size:12px;line-height:12px;color:#1a1a1a;font-weight:normal;">Agora</div>
<div class="t" style="left:513px;top:499.33px;font-size:12.6px;line-height:12.6px;color:#000;font-weight:bold;">Proximo Vôo</div>
<div class="t" style="left:767px;top:498.84px;font-size:12px;line-height:12px;color:#1a1a1a;font-weight:normal;">Agora</div>
<div class="t" style="left:513px;top:515.33px;font-size:12.6px;line-height:12.6px;color:#000;font-weight:bold;">Próximo negócio de balas</div>
<div class="t" style="left:767px;top:514.84px;font-size:12px;line-height:12px;color:#1a1a1a;font-weight:normal;">Agora</div>
<div class="t" style="left:513px;top:531.33px;font-size:12.6px;line-height:12.6px;color:#000;font-weight:bold;">Próxima tentativa de assassínio</div>
<div class="t" style="left:767px;top:530.84px;font-size:12px;line-height:12px;color:#1a1a1a;font-weight:normal;">Agora</div>
<div class="a" style="left:511px;top:559px;width:297px;height:91px;background:#a8a8a8;border:1px solid #111"></div>
<div class="a" style="left:512px;top:560px;width:295px;height:16px;background:linear-gradient(#fbcc00,#e8b800 45%,#c09000)"></div>
<div class="a" style="left:512px;top:576px;width:295px;height:1px;background:#111"></div>
<div class="t" style="left:511px;top:561px;width:297px;text-align:center;font-size:12.6px;line-height:17px;font-weight:bold;color:#000">Barras de estado</div>
<div class="t" style="left:513px;top:584.33px;font-size:12.6px;line-height:12.6px;color:#000;font-weight:bold;">Progresso de nível</div>
<div class="t" style="left:513px;top:608.33px;font-size:12.6px;line-height:12.6px;color:#000;font-weight:bold;">Saúde</div>
<div class="t" style="left:513px;top:632.33px;font-size:12.6px;line-height:12.6px;color:#000;font-weight:bold;">Pontaria</div>
<div class="a" style="left:669px;top:578px;width:100px;height:22px;background:#000"></div>
<div class="a" style="left:671px;top:580px;width:4px;height:18px;background:#f0c040"></div>
<div class="a" style="left:677px;top:580px;width:90px;height:18px;background:#ff0000"></div>
<div class="t" style="left:677px;top:583.84px;font-size:12px;line-height:12px;color:#300000;font-weight:normal;">0.39%</div>
<div class="a" style="left:669px;top:602px;width:100px;height:22px;background:#000"></div>
<div class="a" style="left:671px;top:604px;width:90px;height:18px;background:#008000"></div>
<div class="a" style="left:763px;top:604px;width:4px;height:18px;background:#ff0000"></div>
<div class="t" style="left:671px;top:607.84px;font-size:12px;line-height:12px;color:#002000;font-weight:normal;">97%</div>
<div class="a" style="left:669px;top:626px;width:100px;height:22px;background:#000"></div>
<div class="a" style="left:671px;top:628px;width:33px;height:18px;background:#ffffff"></div>
<div class="a" style="left:706px;top:628px;width:61px;height:18px;background:#ff0000"></div>
<div class="t" style="left:706px;top:631.84px;font-size:12px;line-height:12px;color:#300000;font-weight:normal;">36.2%</div>
<div class="t" style="left:881px;top:240.84px;font-size:12px;line-height:12px;color:#d4dce0;font-weight:normal;">Últimas notícias:</div>
<div class="a" style="left:881px;top:260px;width:111px;height:2px;background:#e6dcc0"></div>
<div class="a" style="left:881px;top:304px;width:111px;height:2px;background:#e6dcc0"></div>
<div class="a" style="left:881px;top:348px;width:111px;height:2px;background:#e6dcc0"></div>
<div class="a" style="left:881px;top:392px;width:111px;height:2px;background:#e6dcc0"></div>
<div class="a" style="left:881px;top:436px;width:111px;height:2px;background:#e6dcc0"></div>
<div class="a" style="left:881px;top:494px;width:111px;height:2px;background:#e6dcc0"></div>
<div class="t" style="left:881px;top:270.84px;font-size:12px;line-height:12px;color:#f4f8f8;font-weight:normal;letter-spacing:0.4px">04-03</div>
<div class="t" style="left:881px;top:284.84px;font-size:12px;line-height:12px;color:#d4dce0;font-weight:normal;">Codes</div>
<div class="t" style="left:881px;top:314.84px;font-size:12px;line-height:12px;color:#f4f8f8;font-weight:normal;letter-spacing:0.4px">17-02</div>
<div class="t" style="left:881px;top:328.84px;font-size:12px;line-height:12px;color:#d4dce0;font-weight:normal;">Bug no Obay</div>
<div class="t" style="left:881px;top:358.84px;font-size:12px;line-height:12px;color:#f4f8f8;font-weight:normal;letter-spacing:0.4px">12-02</div>
<div class="t" style="left:881px;top:372.84px;font-size:12px;line-height:12px;color:#d4dce0;font-weight:normal;">Fabrica de Balas</div>
<div class="t" style="left:881px;top:402.84px;font-size:12px;line-height:12px;color:#f4f8f8;font-weight:normal;letter-spacing:0.4px">10-02</div>
<div class="t" style="left:881px;top:416.84px;font-size:12px;line-height:12px;color:#d4dce0;font-weight:normal;">IRC</div>
<div class="t" style="left:881px;top:446.84px;font-size:12px;line-height:12px;color:#f4f8f8;font-weight:normal;letter-spacing:0.4px">08-02</div>
<div class="t" style="left:881px;top:460.84px;font-size:12px;line-height:12px;color:#d4dce0;font-weight:normal;">Ajudem-nos a</div>
<div class="t" style="left:881px;top:474.84px;font-size:12px;line-height:12px;color:#d4dce0;font-weight:normal;">decidir</div>
<div class="t" style="left:900px;top:504.84px;width:91px;text-align:right;font-size:12px;line-height:12px;color:#d4dce0">Mais...</div>
<div class="t" style="left:915px;top:673.84px;font-size:12px;line-height:12px;color:#d4dce0;font-weight:normal;">Créditos</div>
<div class="a" style="left:1022px;top:113px;width:2px;height:600px;background:#f4f3ee;border-left:1px solid #dcd8c8"></div>


<!-- ===== STATUS BAR ===== -->
<div id="status" class="a"></div>
<svg style="left:2px;top:719px" width="16" height="16" viewBox="0 0 16 16"><path d="M4.5 0.5h8l3 3v12h-11z" fill="#dde4f8" stroke="#8088b8"/><ellipse cx="6.5" cy="9" rx="4" ry="3.5" fill="none" stroke="#2a80e8" stroke-width="2.2"/><path d="M2.5 9h8" stroke="#2a80e8" stroke-width="1.8"/><path d="M1 12c1-4 4-8 9-9" stroke="#40a0f0" stroke-width="1" fill="none"/></svg>
<div class="t" style="left:22px;top:722.69px;font-size:11px;line-height:11px;color:#000;font-weight:normal;">Concluído</div>
<div class="a" style="left:718px;top:718px;width:1px;height:18px;background:#cac6b4;border-right:1px solid #fff;width:2px"></div>
<div class="a" style="left:742px;top:718px;width:1px;height:18px;background:#cac6b4;border-right:1px solid #fff;width:2px"></div>
<div class="a" style="left:766px;top:718px;width:1px;height:18px;background:#cac6b4;border-right:1px solid #fff;width:2px"></div>
<div class="a" style="left:790px;top:718px;width:1px;height:18px;background:#cac6b4;border-right:1px solid #fff;width:2px"></div>
<div class="a" style="left:814px;top:718px;width:1px;height:18px;background:#cac6b4;border-right:1px solid #fff;width:2px"></div>
<div class="a" style="left:838px;top:718px;width:1px;height:18px;background:#cac6b4;border-right:1px solid #fff;width:2px"></div>
<svg style="left:845px;top:720px" width="14" height="14"><circle cx="7" cy="7" r="6.5" fill="#2a5ad8"/><path d="M3 3c2 1 3 0 4 2s-2 2-1 4 2 3 1 4M9 1c1 2 3 2 4 4s-1 3 0 5" stroke="#30a030" stroke-width="2.2" fill="none"/></svg>
<div class="t" style="left:864px;top:722.69px;font-size:11px;line-height:11px;color:#000;font-weight:normal;">Internet</div>
<div class="a" style="left:1022px;top:719px;width:1px;height:17px;background:#fff"></div>


<!-- ===== TASKBAR ===== -->
<div id="task" class="a"></div>
<div class="a" style="left:0;top:738px;width:110px;height:30px;border-radius:0 6px 6px 0/0 15px 15px 0;background:linear-gradient(#2f7f2f 0px,#6aae6a 2px,#54a654 4px,#3f9c3f 9px,#409e40 16px,#48aa48 22px,#3c9a3c 27px,#2a7a2a 30px);box-shadow:inset -3px 0 3px rgba(0,60,0,0.45), inset 2px 0 2px rgba(0,60,0,0.3)"></div>
<svg style="left:11px;top:744px" width="19" height="17" viewBox="0 0 19 17"><path d="M3 1c2-1 4-1 6 0l-1.3 6c-2-1-4-1-6 0z" fill="#f05a1c"/><path d="M10 1.5c2 1 4 1 6 0l-1.3 6c-2 1-4 1-6 0z" fill="#6cc23a"/><path d="M1.5 8c2-1 4-1 6 0l-1.3 6c-2-1-4-1-6 0z" fill="#3d9ae8"/><path d="M8.5 8.5c2 1 4 1 6 0l-1.3 6c-2 1-4 1-6 0z" fill="#f7c51a"/></svg>
<div class="t" style="left:35px;top:744.61px;font-size:17px;line-height:17px;color:#fff;font-weight:bold;font-style:italic;text-shadow:1px 1px 1px #1a4a1a">Iniciar</div>
<svg style="left:122px;top:745px" width="16" height="16" viewBox="0 0 16 16"><path d="M2 1h11v3h2v10H4v-2H2z" fill="#3a70e0"/><rect x="1" y="3" width="11" height="12" rx="2" fill="#fdf6d0" stroke="#1a50b8"/><path d="M4 7h6M4 10h4" stroke="#5a80d0"/><path d="M3 13l3-2" stroke="#000" stroke-width="1.2"/><circle cx="13" cy="5.5" r="1.6" fill="#f05020"/></svg>
<svg style="left:145px;top:745px" width="16" height="16" viewBox="0 0 16 16"><circle cx="8" cy="8" r="7.3" fill="none" stroke="#40b040" stroke-width="1.6"/><path d="M1 8a7 7 0 0 1 5-6.8" stroke="#e04030" stroke-width="1.6" fill="none"/><path d="M15 9a7 7 0 0 1-6 6" stroke="#f0c020" stroke-width="1.6" fill="none"/><path d="M2 11a7 7 0 0 0 5 4" stroke="#3080e0" stroke-width="1.6" fill="none"/><circle cx="8" cy="8" r="5.5" fill="#e8eef8"/><path d="M6.3 5v6l5-3z" fill="#0a1a80"/></svg>
<svg style="left:168px;top:744px" width="17" height="17" viewBox="0 0 17 17"><ellipse cx="8.5" cy="8.5" rx="8.2" ry="3.3" fill="none" stroke="#3aa0f0" stroke-width="1.2" transform="rotate(-35 8.5 8.5)"/><path d="M4.5 9.5h9.2a4.6 4.3 0 1 0-1.3 3.4" fill="none" stroke="#2aa0f4" stroke-width="2.6"/></svg>
<div class="a" style="left:205px;top:742px;width:86px;height:23px;border-radius:3px;background:linear-gradient(#4e90f8,#3c81f3 20%,#3a7ef0 80%,#2e6ad8);box-shadow:inset -1px -1px 0 #1e50b8, inset 1px 1px 0 #6aa4ff"></div>
<svg style="left:214px;top:745px" width="17" height="17" viewBox="0 0 17 17"><path d="M3.5 0.5h9.5l3 3v12.5H3.5z" fill="#f2efe2" stroke="#7a6e58"/><path d="M13 0.5v3h3" fill="#fff" stroke="#5a5040"/><path d="M1 11c1-4 4-7 8-8" stroke="#f0b050" stroke-width="1.3" fill="none"/><path d="M3 8.2h7a3.6 3.4 0 1 0-1 2.8" fill="none" stroke="#1a50d8" stroke-width="2"/><path d="M9.5 4.5l1.5-1.5" stroke="#30c0f0" stroke-width="1.2"/></svg>
<div class="t" style="left:234px;top:748.27px;font-size:11.5px;line-height:11.5px;color:#fff;font-weight:normal;">OGam...</div>
<div class="a" style="left:292px;top:742px;width:86px;height:23px;border-radius:3px;background:linear-gradient(#4e90f8,#3c81f3 20%,#3a7ef0 80%,#2e6ad8);box-shadow:inset -1px -1px 0 #1e50b8, inset 1px 1px 0 #6aa4ff"></div>
<svg style="left:301px;top:745px" width="17" height="17" viewBox="0 0 17 17"><path d="M3.5 0.5h9.5l3 3v12.5H3.5z" fill="#f2efe2" stroke="#7a6e58"/><path d="M13 0.5v3h3" fill="#fff" stroke="#5a5040"/><path d="M1 11c1-4 4-7 8-8" stroke="#f0b050" stroke-width="1.3" fill="none"/><path d="M3 8.2h7a3.6 3.4 0 1 0-1 2.8" fill="none" stroke="#1a50d8" stroke-width="2"/><path d="M9.5 4.5l1.5-1.5" stroke="#30c0f0" stroke-width="1.2"/></svg>
<div class="t" style="left:321px;top:748.27px;font-size:11.5px;line-height:11.5px;color:#fff;font-weight:normal;">http:/...</div>
<div class="a" style="left:379px;top:742px;width:86px;height:23px;border-radius:3px;background:linear-gradient(#4e90f8,#3c81f3 20%,#3a7ef0 80%,#2e6ad8);box-shadow:inset -1px -1px 0 #1e50b8, inset 1px 1px 0 #6aa4ff"></div>
<svg style="left:388px;top:745px" width="17" height="17" viewBox="0 0 17 17"><path d="M3.5 0.5h9.5l3 3v12.5H3.5z" fill="#f2efe2" stroke="#7a6e58"/><path d="M13 0.5v3h3" fill="#fff" stroke="#5a5040"/><path d="M1 11c1-4 4-7 8-8" stroke="#f0b050" stroke-width="1.3" fill="none"/><path d="M3 8.2h7a3.6 3.4 0 1 0-1 2.8" fill="none" stroke="#1a50d8" stroke-width="2"/><path d="M9.5 4.5l1.5-1.5" stroke="#30c0f0" stroke-width="1.2"/></svg>
<div class="t" style="left:408px;top:748.27px;font-size:11.5px;line-height:11.5px;color:#fff;font-weight:normal;">Omert...</div>
<div class="a" style="left:466px;top:742px;width:86px;height:23px;border-radius:3px;background:linear-gradient(#4e90f8,#3c81f3 20%,#3a7ef0 80%,#2e6ad8);box-shadow:inset -1px -1px 0 #1e50b8, inset 1px 1px 0 #6aa4ff"></div>
<svg style="left:475px;top:745px" width="17" height="17" viewBox="0 0 17 17"><rect x="1.5" y="0.5" width="11" height="8" fill="#000090" stroke="#a09080"/><rect x="4" y="3" width="1.5" height="4" fill="#fff"/><rect x="8" y="3" width="1.5" height="4" fill="#fff"/><rect x="0" y="7" width="8" height="9" fill="#ff0000" stroke="#900" stroke-width="0.6"/><path d="M9 9a3 3 0 1 1 0 4l2-2z" fill="#ffff00" stroke="#000" stroke-width="0.8"/></svg>
<div class="t" style="left:495px;top:748.27px;font-size:11.5px;line-height:11.5px;color:#fff;font-weight:normal;">mIRC ...</div>
<div class="a" style="left:553px;top:742px;width:86px;height:23px;border-radius:3px;background:linear-gradient(#4e90f8,#3c81f3 20%,#3a7ef0 80%,#2e6ad8);box-shadow:inset -1px -1px 0 #1e50b8, inset 1px 1px 0 #6aa4ff"></div>
<svg style="left:562px;top:745px" width="17" height="17" viewBox="0 0 17 17"><path d="M1 5h14v10H1z" fill="#f0e050" stroke="#a89020"/><path d="M5 3l4-2 6 6" stroke="#000" fill="#fff" stroke-width="0.8"/><circle cx="8" cy="10" r="3.2" fill="#20a030"/><path d="M6 9a2 2 0 0 1 3 3" fill="#30b0f0"/><path d="M3 16h11" stroke="#806040" stroke-dasharray="1 1"/></svg>
<div class="t" style="left:582px;top:748.27px;font-size:11.5px;line-height:11.5px;color:#fff;font-weight:normal;">ftp://...</div>
<div class="a" style="left:640px;top:742px;width:86px;height:23px;border-radius:3px;background:linear-gradient(#4e90f8,#3c81f3 20%,#3a7ef0 80%,#2e6ad8);box-shadow:inset -1px -1px 0 #1e50b8, inset 1px 1px 0 #6aa4ff"></div>
<svg style="left:645px;top:745px" width="17" height="17" viewBox="0 0 17 17"><path d="M0.5 2.5h5l1.5 1.5h7v10.5H0.5z" fill="#f0c850" stroke="#c89020"/><path d="M2.5 6.5h12l-1.5 8H0.8z" fill="#fce890" stroke="#d8a030"/></svg>
<div class="t" style="left:665px;top:748.27px;font-size:11.5px;line-height:11.5px;color:#fff;font-weight:normal;">omerta</div>
<div class="a" style="left:727px;top:742px;width:86px;height:23px;border-radius:3px;background:linear-gradient(#4e90f8,#3c81f3 20%,#3a7ef0 80%,#2e6ad8);box-shadow:inset -1px -1px 0 #1e50b8, inset 1px 1px 0 #6aa4ff"></div>
<svg style="left:736px;top:745px" width="17" height="17" viewBox="0 0 17 17"><path d="M3.5 0.5h9.5l3 3v12.5H3.5z" fill="#f2efe2" stroke="#7a6e58"/><path d="M13 0.5v3h3" fill="#fff" stroke="#5a5040"/><path d="M1 11c1-4 4-7 8-8" stroke="#f0b050" stroke-width="1.3" fill="none"/><path d="M3 8.2h7a3.6 3.4 0 1 0-1 2.8" fill="none" stroke="#1a50d8" stroke-width="2"/><path d="M9.5 4.5l1.5-1.5" stroke="#30c0f0" stroke-width="1.2"/></svg>
<div class="t" style="left:756px;top:748.27px;font-size:11.5px;line-height:11.5px;color:#fff;font-weight:normal;">http:/...</div>
<div class="a" style="left:814px;top:742px;width:86px;height:23px;border-radius:3px;background:#1e4ab8;box-shadow:inset 1px 1px 2px #10307a"></div>
<svg style="left:823px;top:745px" width="17" height="17" viewBox="0 0 17 17"><path d="M3.5 0.5h9.5l3 3v12.5H3.5z" fill="#f2efe2" stroke="#7a6e58"/><path d="M13 0.5v3h3" fill="#fff" stroke="#5a5040"/><path d="M1 11c1-4 4-7 8-8" stroke="#f0b050" stroke-width="1.3" fill="none"/><path d="M3 8.2h7a3.6 3.4 0 1 0-1 2.8" fill="none" stroke="#1a50d8" stroke-width="2"/><path d="M9.5 4.5l1.5-1.5" stroke="#30c0f0" stroke-width="1.2"/></svg>
<div class="t" style="left:843px;top:748.27px;font-size:11.5px;line-height:11.5px;color:#fff;font-weight:normal;">Omerta</div>
<div class="a" style="left:913px;top:738px;width:111px;height:30px;background:linear-gradient(#1ea8f0 0%,#18a0ec 10%,#0f8fe2 50%,#0c85d8 90%,#0a70c0 100%);border-left:1px solid #0a4aa8"></div>
<svg style="left:924px;top:745px" width="16" height="16"><rect x="0" y="0" width="16" height="16" fill="#c8c8c8"/><rect x="6" y="0" width="10" height="6" fill="#fff"/><rect x="2" y="8" width="6" height="5" fill="#1010c0"/><path d="M1 14h12" stroke="#000"/></svg>
<svg style="left:941px;top:745px" width="16" height="16"><rect x="5" y="0" width="10" height="9" fill="#384878" stroke="#a0b0d8"/><rect x="1" y="4" width="9" height="8" fill="#80c8f8" stroke="#a0b0d8"/><ellipse cx="6" cy="14" rx="5" ry="2" fill="#c0c8e8"/></svg>
<svg style="left:960px;top:745px" width="16" height="16"><circle cx="7" cy="4" r="3.5" fill="#3a9ad8"/><path d="M1 16c1-6 4-9 6-9s5 3 6 9z" fill="#60b060"/><path d="M11 9l5 3v4h-4z" fill="#f08030"/></svg>
<div class="t" style="left:984px;top:748.27px;font-size:11.5px;line-height:11.5px;color:#fff;font-weight:normal;">14:26</div>

</body></html>
